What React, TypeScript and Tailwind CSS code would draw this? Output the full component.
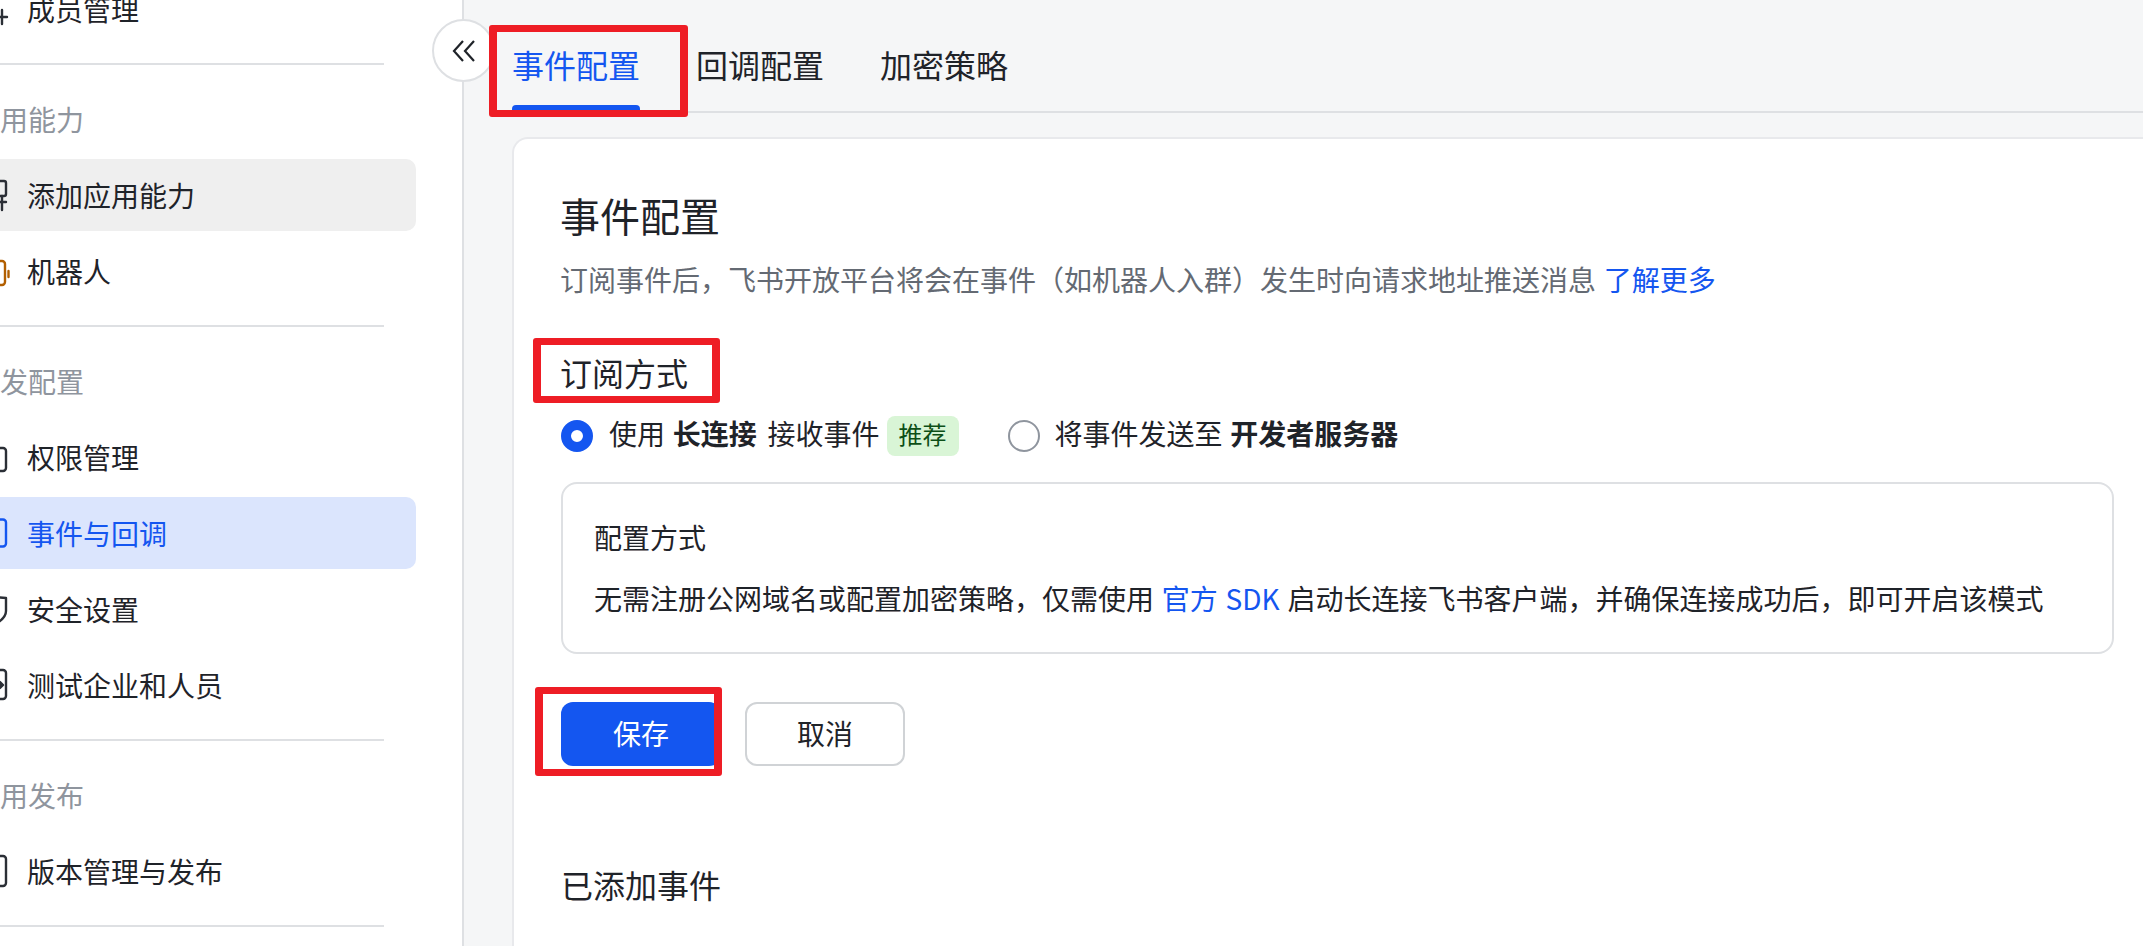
import { ReactNode } from 'react';

const FONT = 'font-["Liberation_Sans","Noto_Sans_CJK_SC",sans-serif]';

// Sidebar icons: the page is scrolled sideways, so only their right edge shows
const Icon = ({ children, color = '#2b2f36' }: { children: ReactNode; color?: string }) => (
  <svg width="28" height="28" viewBox="0 0 28 28" fill="none" stroke={color} strokeWidth="2.4" strokeLinejoin="round" strokeLinecap="round" className="shrink-0 overflow-visible">
    {children}
  </svg>
);

const ICONS: Record<string, ReactNode> = {
  member: <Icon><path d="M22 15v14M15 22h12" /></Icon>,
  add: <Icon><rect x="14" y="0" width="12" height="15" rx="2" /><path d="M22 15v14M15 21h11" /></Icon>,
  bot: <Icon color="#b25f00"><rect x="0" y="4" width="25" height="24" rx="3" /><path d="M28.5 14v6" /></Icon>,
  perm: <Icon><rect x="0" y="5" width="26" height="23" rx="3" /></Icon>,
  event: <Icon color="#1456f0"><rect x="0" y="0.5" width="26" height="27" rx="3" /></Icon>,
  shield: <Icon><path d="M0 1l26 2v13c0 5-4 9-9 12" /></Icon>,
  test: <Icon><rect x="0" y="-1" width="26" height="29" rx="3" /><path d="M20 11l3 3-3 3z" fill="#2b2f36" /></Icon>,
  version: <Icon><rect x="0" y="-1" width="26" height="30" rx="3" /></Icon>,
};

function NavItem({ icon, label, active, hover }: { icon: string; label: string; active?: boolean; hover?: boolean }) {
  return (
    <div
      className={`flex items-center gap-[19px] h-[72px] pl-6 rounded-[10px] text-[28px] ${
        active ? 'bg-[#dbe5fd] text-[#1456f0]' : hover ? 'bg-[#efefef] text-[#1f2329]' : 'text-[#1f2329]'
      }`}
    >
      {ICONS[icon]}
      <span className="pt-[5px]">{label}</span>
    </div>
  );
}

function NavGroup({ title, children }: { title: string; children: ReactNode }) {
  return (
    <>
      <div className="h-[2px] mt-[18px] ml-4 mr-8 bg-[#dee0e3]" />
      <div className="h-10 mt-[37px] mb-[17px] pl-4 text-[28px] leading-10 text-[#8f959e]">{title}</div>
      <div className="flex flex-col gap-1">{children}</div>
    </>
  );
}

// Red markup rectangles drawn on top of the screenshot
const RedBox = ({ className }: { className: string }) => (
  <div className={`absolute border-x-[8px] border-y-[7px] border-[#ee1d25] rounded-[3px] pointer-events-none ${className}`} />
);

export default function App() {
  return (
    <div className={`relative flex w-[2143px] h-[946px] overflow-hidden bg-white ${FONT}`}>
      {/* Sidebar */}
      <aside className="w-[464px] shrink-0 border-r-2 border-[#dee0e3] overflow-hidden">
        <div className="w-[460px] -ml-11 -mt-[27px]">
          <NavItem icon="member" label="成员管理" />
          <NavGroup title="应用能力">
            <NavItem icon="add" label="添加应用能力" hover />
            <NavItem icon="bot" label="机器人" />
          </NavGroup>
          <NavGroup title="开发配置">
            <NavItem icon="perm" label="权限管理" />
            <NavItem icon="event" label="事件与回调" active />
            <NavItem icon="shield" label="安全设置" />
            <NavItem icon="test" label="测试企业和人员" />
          </NavGroup>
          <NavGroup title="应用发布">
            <NavItem icon="version" label="版本管理与发布" />
          </NavGroup>
          <div className="h-[2px] mt-[18px] ml-4 mr-8 bg-[#dee0e3]" />
        </div>
      </aside>

      {/* Main */}
      <main className="flex-1 min-w-0 bg-[#f5f6f7] pl-12">
        <div className="flex gap-14 h-[113px] pt-[43px] border-b-2 border-[#dee0e3] text-[32px] leading-[48px] text-[#1f2329]">
          <div className="relative h-[68px] text-[#1456f0]">
            事件配置
            <div className="absolute left-0 right-0 bottom-0 h-[6px] rounded-t-[4px] bg-[#1456f0]" />
          </div>
          <div>回调配置</div>
          <div>加密策略</div>
        </div>

        <div className="mt-6 h-[900px] bg-white border-2 border-r-0 border-[#e8e9ec] rounded-l-2xl pl-[47px] pr-[29px]">
          <h1 className="mt-[53px] -ml-px text-[40px] leading-[52px] font-normal text-[#1f2329]">事件配置</h1>
          <p className="mt-[18px] -ml-px text-[28px] leading-10 text-[#646a73]">
            订阅事件后，飞书开放平台将会在事件（如机器人入群）发生时向请求地址推送消息 <span className="text-[#1456f0]">了解更多</span>
          </p>

          <h2 className="mt-[49px] -ml-px text-[32px] leading-[48px] font-normal text-[#1f2329]">订阅方式</h2>
          <div className="flex items-center h-10 mt-[17px] text-[28px] text-[#1f2329]">
            <span className="w-8 h-8 rounded-full border-[10px] border-[#1456f0] bg-white" />
            <span className="ml-4">使用 <b className="font-bold mr-[3px]">长连接</b> 接收事件</span>
            <span className="ml-[7px] w-[72px] h-10 rounded-lg bg-[#d9f5d6] text-[#0d4f17] text-[24px] leading-10 text-center">推荐</span>
            <span className="ml-[49px] w-8 h-8 rounded-full border-2 border-[#8f959e] bg-white" />
            <span className="ml-[15px]">将事件发送至 <b className="font-bold">开发者服务器</b></span>
          </div>

          <div className="mt-[26px] h-[172px] border-2 border-[#dee0e3] rounded-2xl pl-[31px] pr-[32px] pt-[36px] text-[#1f2329] text-[28px] leading-10">
            <div>配置方式</div>
            <div className="mt-[18px]">
              无需注册公网域名或配置加密策略，仅需使用 <span className="text-[#1456f0]">官方 <span className='font-["Noto_Sans_CJK_SC"]'>SDK</span></span> 启动长连接飞书客户端，并确保连接成功后，即可开启该模式
            </div>
          </div>

          <div className="flex gap-6 mt-[48px] text-[28px]">
            <button className="w-40 h-16 pt-1 rounded-xl bg-[#1456f0] text-white">保存</button>
            <button className="w-40 h-16 pt-1 rounded-xl border-2 border-[#d0d3d6] bg-white text-[#1f2329]">取消</button>
          </div>

          <h2 className="mt-[97px] text-[32px] leading-[48px] font-normal text-[#1f2329]">已添加事件</h2>
        </div>
      </main>

      {/* Collapse button sits on the sidebar edge */}
      <div className="absolute left-[432px] top-[19px] w-[63px] h-[63px] rounded-full border-2 border-[#dee0e3] bg-white flex items-center justify-center">
        <svg width="24" height="22" viewBox="0 0 24 22" fill="none" stroke="#1f2329" strokeWidth="2.2">
          <path d="M11 1L2 11l9 10M22 1l-9 10 9 10" />
        </svg>
      </div>

      <RedBox className="left-[489px] top-[25px] w-[199px] h-[92px]" />
      <RedBox className="left-[533px] top-[338px] w-[187px] h-[65px]" />
      <RedBox className="left-[535px] top-[687px] w-[187px] h-[89px]" />
    </div>
  );
}
